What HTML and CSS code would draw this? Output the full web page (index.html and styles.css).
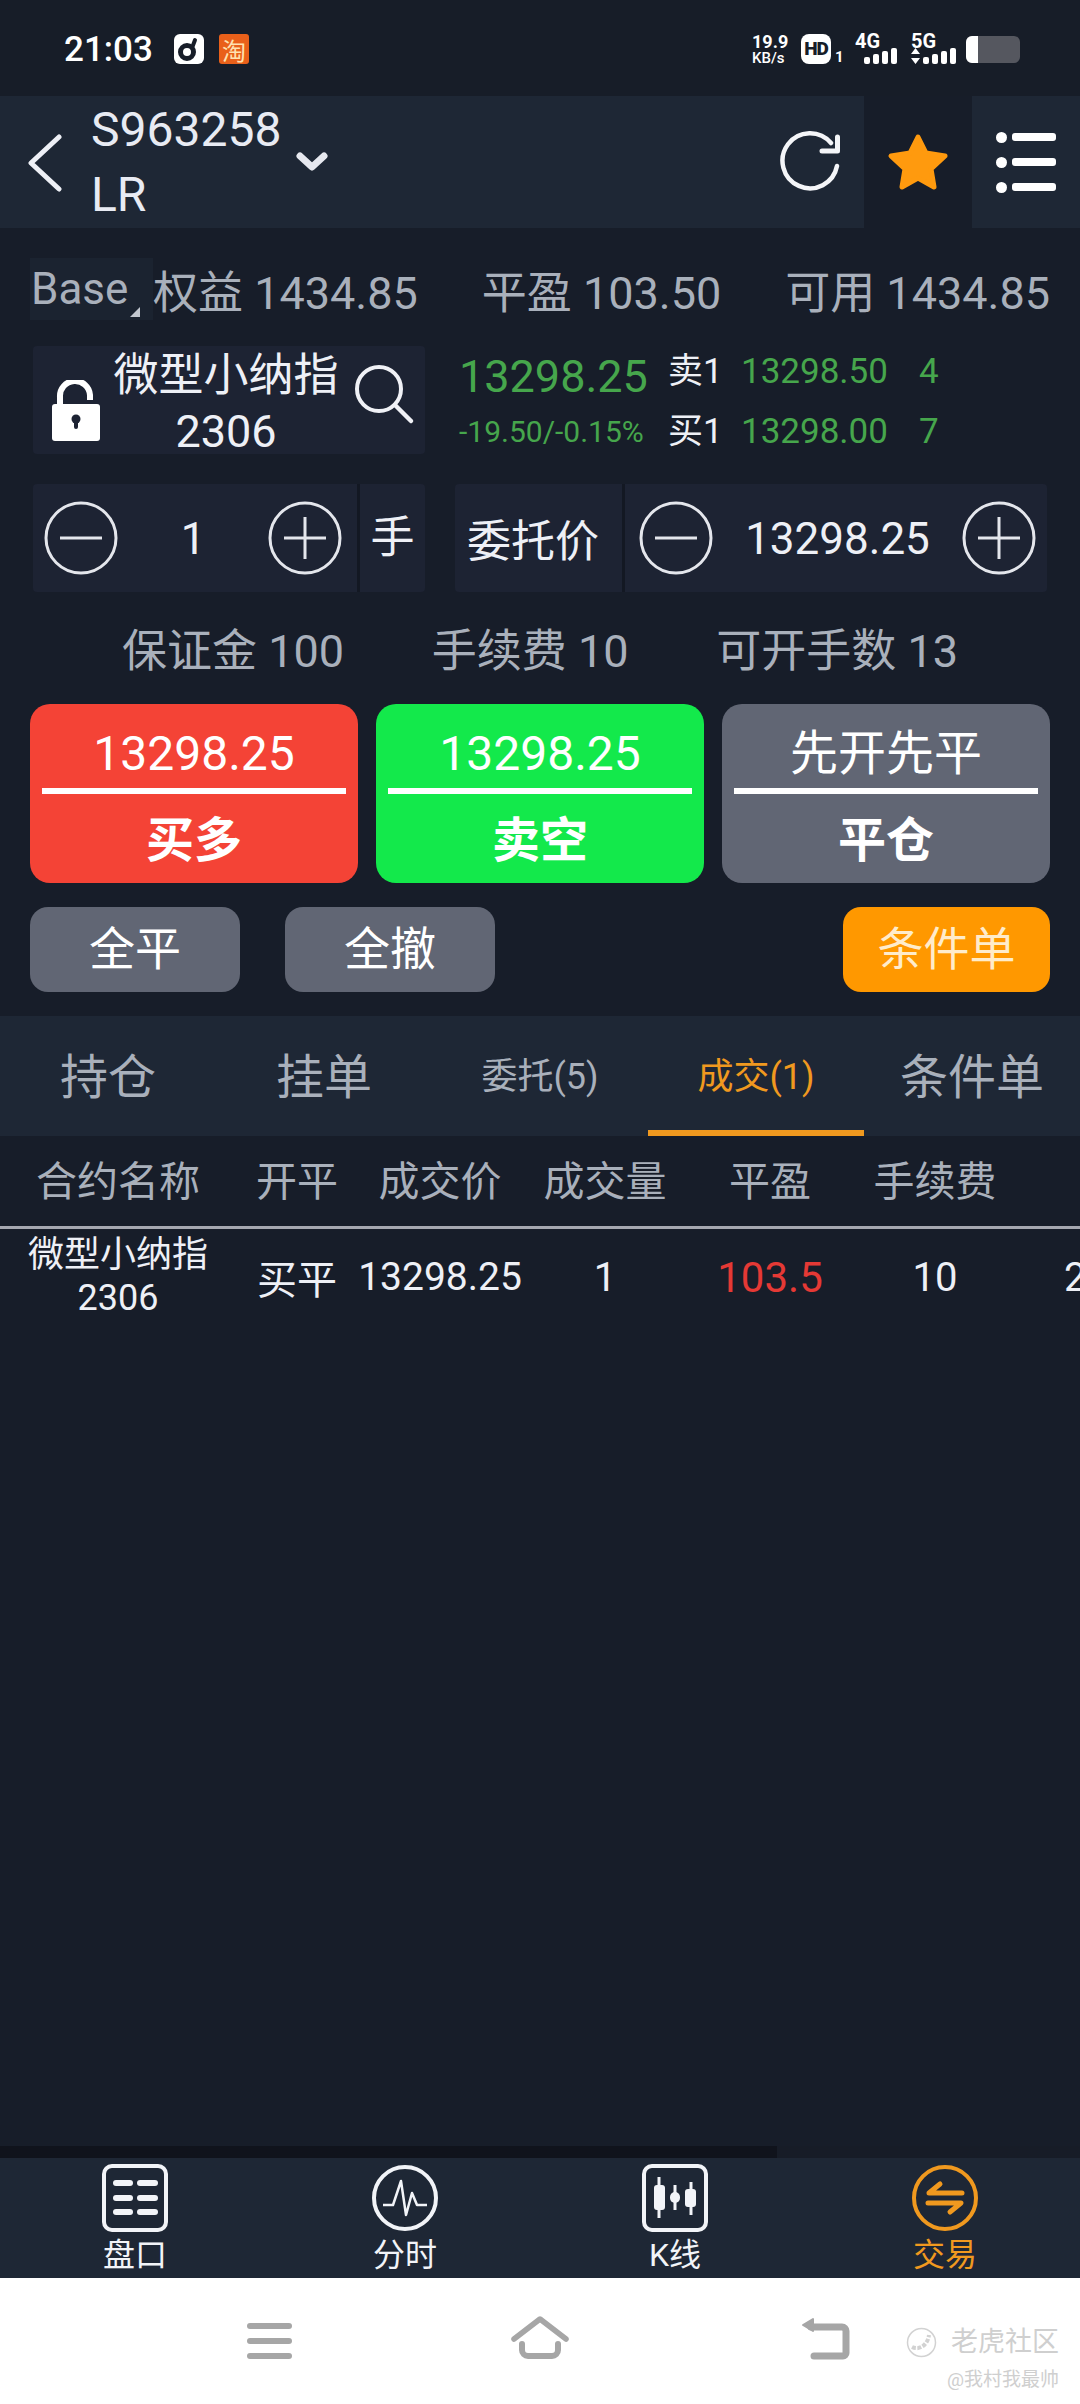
FILE: index.html
```html
<!DOCTYPE html>
<html lang="zh-CN">

<head>
    <meta charset="UTF-8">
    <meta name="viewport" content="width=device-width, initial-scale=1.0">
    <title>交易</title>
    <link rel="stylesheet" href="styles.css">
</head>

<body>

    <div class="page">

        <!-- Status Bar -->
        <div class="statusbar">
            <span class="clock">21:03</span>
            <span class="app-icon app-white">
                <svg width="30" height="30" viewBox="0 0 30 30">
                    <circle cx="13" cy="18" r="6.5" fill="none" stroke="#171d28" stroke-width="5" />
                    <path d="M18 14 L21 6" stroke="#171d28" stroke-width="4" stroke-linecap="round" />
                </svg>
            </span>
            <span class="app-icon app-orange">淘</span>

            <div class="status-right">
                <div class="speed"><span>19.9</span><small>KB/s</small></div>
                <span class="hd">HD</span>
                <span class="hd-sub">1</span>
                <div class="signal signal-4g">
                    <b>4G</b>
                    <div class="bars"><i class="b1"></i><i class="b2"></i><i class="b3"></i><i class="b4"></i></div>
                </div>
                <div class="signal signal-5g">
                    <b>5G</b>
                    <div class="bars">
                        <svg width="9" height="16" viewBox="0 0 9 16">
                            <path d="M4.5 0 L9 6 H0 Z M4.5 16 L0 10 H9 Z" fill="#fff" />
                        </svg>
                        <i class="b1"></i><i class="b2"></i><i class="b3"></i><i class="b4"></i>
                    </div>
                </div>
                <div class="battery"><span class="battery-level"></span></div>
            </div>
        </div>

        <!-- Header -->
        <div class="header">
            <div class="header-main">
                <svg class="back" width="34" height="58" viewBox="0 0 34 58">
                    <path d="M31 3 L3 29 L31 55" fill="none" stroke="#eef0f6" stroke-width="5" stroke-linecap="round" stroke-linejoin="round" />
                </svg>
                <div class="account-id"><span>S963258</span><span>LR</span></div>
                <svg class="caret" width="32" height="20" viewBox="0 0 32 20">
                    <path d="M4 4 L16 15 L28 4" fill="none" stroke="#e6e8ef" stroke-width="7" stroke-linecap="round" stroke-linejoin="round" />
                </svg>
                <svg class="refresh" width="62" height="62" viewBox="0 0 62 62">
                    <path d="M52 12 A27.5 27.5 0 1 0 58 35" fill="none" stroke="#f4f5f8" stroke-width="4.5" stroke-linecap="round" />
                    <path d="M43 20 H58.5 V6" fill="none" stroke="#f4f5f8" stroke-width="5" stroke-linecap="round" stroke-linejoin="round" />
                </svg>
            </div>
            <div class="header-star">
                <svg width="62" height="58" viewBox="0 0 62 58">
                    <polygon points="31,4 39,20 58,23 44,36 47,54 31,45 15,54 18,36 4,23 23,20" fill="#ff9a0e" stroke="#ff9a0e" stroke-width="5" stroke-linejoin="round" />
                </svg>
            </div>
            <div class="header-menu">
                <div class="menu-line"><i></i><span></span></div>
                <div class="menu-line"><i></i><span></span></div>
                <div class="menu-line"><i></i><span></span></div>
            </div>
        </div>

        <!-- Account Summary -->
        <div class="summary">
            <div class="summary-first">
                <span class="base-tag">Base</span>
                <span>权益 1434.85</span>
            </div>
            <span>平盈 103.50</span>
            <span>可用 1434.85</span>
        </div>

        <!-- Instrument and Quote -->
        <div class="quote-row">
            <div class="panel instrument">
                <svg width="50" height="62" viewBox="0 0 50 62">
                    <path d="M9 26 V17 A15 15 0 0 1 39 15 V20" fill="none" stroke="#fff" stroke-width="6" />
                    <rect x="1" y="24" width="48" height="37" rx="3" fill="#fff" />
                    <circle cx="25" cy="39" r="4.5" fill="#1d2333" />
                    <rect x="23" y="40" width="4" height="9" rx="2" fill="#1d2333" />
                </svg>
                <div class="instrument-name"><span>微型小纳指</span><span>2306</span></div>
                <svg width="62" height="62" viewBox="0 0 62 62">
                    <circle cx="26" cy="26" r="22" fill="none" stroke="#f0f1f6" stroke-width="4" />
                    <path d="M42 42 L58 58" stroke="#f0f1f6" stroke-width="4.5" stroke-linecap="round" />
                </svg>
            </div>

            <div class="last-price">
                <span class="last-value">13298.25</span>
                <span class="last-change">-19.50/-0.15%</span>
            </div>

            <div class="book">
                <div class="book-line"><span class="book-label">卖1</span><span class="book-price">13298.50</span><span>4</span></div>
                <div class="book-line"><span class="book-label">买1</span><span class="book-price">13298.00</span><span>7</span></div>
            </div>
        </div>

        <!-- Quantity and Price Steppers -->
        <div class="stepper-row">
            <div class="panel stepper stepper-qty">
                <div class="stepper-body">
                    <svg class="round-btn" width="74" height="74" viewBox="0 0 74 74">
                        <circle cx="37" cy="37" r="35" fill="none" stroke="#e4e6ec" stroke-width="3" />
                        <path d="M16 37 H58" stroke="#e4e6ec" stroke-width="3" />
                    </svg>
                    <span class="stepper-value">1</span>
                    <svg class="round-btn" width="74" height="74" viewBox="0 0 74 74">
                        <circle cx="37" cy="37" r="35" fill="none" stroke="#e4e6ec" stroke-width="3" />
                        <path d="M16 37 H58 M37 16 V58" stroke="#e4e6ec" stroke-width="3" />
                    </svg>
                </div>
                <span class="unit">手</span>
            </div>

            <div class="panel stepper stepper-price">
                <span class="price-label">委托价</span>
                <div class="stepper-body">
                    <svg class="round-btn" width="74" height="74" viewBox="0 0 74 74">
                        <circle cx="37" cy="37" r="35" fill="none" stroke="#e4e6ec" stroke-width="3" />
                        <path d="M16 37 H58" stroke="#e4e6ec" stroke-width="3" />
                    </svg>
                    <span class="stepper-value">13298.25</span>
                    <svg class="round-btn" width="74" height="74" viewBox="0 0 74 74">
                        <circle cx="37" cy="37" r="35" fill="none" stroke="#e4e6ec" stroke-width="3" />
                        <path d="M16 37 H58 M37 16 V58" stroke="#e4e6ec" stroke-width="3" />
                    </svg>
                </div>
            </div>
        </div>

        <!-- Margin and Fee -->
        <div class="fees">
            <span>保证金 100</span>
            <span>手续费 10</span>
            <span>可开手数 13</span>
        </div>

        <!-- Order Buttons -->
        <div class="order-buttons">
            <div class="order-btn btn-red"><span class="order-top">13298.25</span><span class="order-bottom">买多</span></div>
            <div class="order-btn btn-green"><span class="order-top">13298.25</span><span class="order-bottom">卖空</span></div>
            <div class="order-btn btn-gray"><span class="order-top">先开先平</span><span class="order-bottom">平仓</span></div>
        </div>

        <div class="quick-buttons">
            <span class="quick-btn">全平</span>
            <span class="quick-btn">全撤</span>
            <span class="quick-btn quick-orange">条件单</span>
        </div>

        <!-- List Tabs -->
        <div class="tabs">
            <span class="tab">持仓</span>
            <span class="tab">挂单</span>
            <span class="tab tab-small">委托(5)</span>
            <span class="tab tab-small tab-active">成交(1)</span>
            <span class="tab">条件单</span>
        </div>

        <!-- Trades Table -->
        <div class="table">
            <div class="table-row table-head">
                <span>合约名称</span>
                <span>开平</span>
                <span>成交价</span>
                <span>成交量</span>
                <span>平盈</span>
                <span>手续费</span>
                <span></span>
            </div>
            <div class="table-row table-item">
                <span class="cell-name">微型小纳指<br>2306</span>
                <span>买平</span>
                <span class="cell-price">13298.25</span>
                <span>1</span>
                <span class="cell-profit">103.5</span>
                <span>10</span>
                <span class="cell-cut">2023</span>
            </div>
        </div>

        <div class="scrollbar"><div class="scrollbar-thumb"></div></div>

        <!-- Bottom Tabs -->
        <div class="bottom-tabs">
            <div class="bottom-tab">
                <svg width="66" height="68" viewBox="0 0 66 68">
                    <rect x="2" y="2" width="62" height="64" rx="8" fill="none" stroke="#f2f4f8" stroke-width="4" />
                    <g fill="#f2f4f8">
                        <rect x="11" y="16" width="20" height="6" rx="3" />
                        <rect x="35" y="16" width="21" height="6" rx="3" />
                        <rect x="11" y="31" width="20" height="6" rx="3" />
                        <rect x="35" y="31" width="21" height="6" rx="3" />
                        <rect x="11" y="45" width="20" height="6" rx="3" />
                        <rect x="35" y="45" width="21" height="6" rx="3" />
                    </g>
                </svg>
                <span>盘口</span>
            </div>
            <div class="bottom-tab">
                <svg width="66" height="68" viewBox="0 0 66 68">
                    <circle cx="33" cy="34" r="31" fill="none" stroke="#f2f4f8" stroke-width="4" />
                    <path d="M11 41 H21 L29 17 L34 51 L40 29 L45 41 H55" fill="none" stroke="#f2f4f8" stroke-width="2.5" stroke-linejoin="round" />
                </svg>
                <span>分时</span>
            </div>
            <div class="bottom-tab">
                <svg width="66" height="68" viewBox="0 0 66 68">
                    <rect x="2" y="2" width="62" height="64" rx="8" fill="none" stroke="#f2f4f8" stroke-width="4" />
                    <path d="M17 13 V54 M33 21 V46 M49 18 V51" stroke="#f2f4f8" stroke-width="3" />
                    <g fill="#f2f4f8">
                        <rect x="12" y="21" width="11" height="25" rx="3" />
                        <rect x="28" y="28" width="10" height="11" rx="5" />
                        <rect x="43" y="25" width="11" height="18" rx="3" />
                    </g>
                </svg>
                <span>K线</span>
            </div>
            <div class="bottom-tab bottom-tab-active">
                <svg width="66" height="68" viewBox="0 0 66 68">
                    <circle cx="33" cy="34" r="31" fill="none" stroke="#f0991f" stroke-width="4" />
                    <path d="M50 29 H17 L28 20 M16 39 H49 L38 48" fill="none" stroke="#f0991f" stroke-width="5" stroke-linecap="round" stroke-linejoin="round" />
                </svg>
                <span>交易</span>
            </div>
        </div>

        <!-- System Navigation -->
        <div class="navbar">
            <div class="nav-menu"><i></i><i></i><i></i></div>
            <svg class="nav-home" width="58" height="44" viewBox="0 0 58 44">
                <path d="M3 23 L29 3 L55 23" fill="none" stroke="#a6a6a6" stroke-width="5.5" stroke-linecap="round" stroke-linejoin="round" />
                <path d="M11 28 V34 A6 6 0 0 0 17 40 H41 A6 6 0 0 0 47 34 V28" fill="none" stroke="#a6a6a6" stroke-width="6" stroke-linecap="round" />
            </svg>
            <svg class="nav-back" width="50" height="44" viewBox="0 0 50 44">
                <path d="M10 10 H41 A4 4 0 0 1 45 14 V36 A3 3 0 0 1 42 39 H13" fill="none" stroke="#a6a6a6" stroke-width="7" stroke-linecap="round" />
                <path d="M2 8 L12 2 V14 Z" fill="#a6a6a6" stroke="#a6a6a6" stroke-width="2" stroke-linejoin="round" />
            </svg>

            <div class="watermark">
                <div class="watermark-top">
                    <svg width="31" height="31" viewBox="0 0 31 31">
                        <circle cx="15.5" cy="15.5" r="14" fill="none" stroke="#d2d2d2" stroke-width="1.5" />
                        <path d="M6 20 C14 24 22 17 23 8" fill="none" stroke="#d2d2d2" stroke-width="4" stroke-dasharray="4 1.5" />
                    </svg>
                    <span>老虎社区</span>
                </div>
                <span class="watermark-user">@我村我最帅</span>
            </div>
        </div>

    </div>

</body>

</html>
```

FILE: styles.css
```css
/* Basic Reset */
* {
    margin: 0;
    padding: 0;
    box-sizing: border-box;
}

body {
    background-color: #171d29;
    font-family: Roboto, 'Noto Sans CJK SC', sans-serif;
    color: #eef0f6;
    overflow: hidden;
}

.page {
    width: 1080px;
    height: 2404px;
    display: flex;
    flex-direction: column;
    overflow: hidden;
}

svg {
    display: block;
    flex: none;
}

/* Status Bar */
.statusbar {
    height: 96px;
    flex: none;
    display: flex;
    align-items: center;
    padding: 2px 60px 0 64px;
    background-color: #171d28;
}

.clock {
    font-size: 35px;
    font-weight: 500;
    color: #fff;
    width: 110px;
}

.app-icon {
    width: 30px;
    height: 30px;
    margin-right: 15px;
    border-radius: 6px;
    display: flex;
    align-items: center;
    justify-content: center;
}

.app-white {
    background-color: #fff;
}

.app-orange {
    background-color: #e9601a;
    border-radius: 3px;
    color: #ffe2b0;
    font-size: 24px;
}

.status-right {
    margin-left: auto;
    display: flex;
    align-items: center;
    color: #fff;
}

.speed {
    display: flex;
    flex-direction: column;
    width: 49px;
    font-size: 18px;
    font-weight: 700;
    line-height: 18px;
}

.speed small {
    font-size: 15px;
    font-weight: 500;
    line-height: 14px;
}

.hd {
    width: 30px;
    height: 30px;
    border-radius: 8px;
    background-color: #fff;
    color: #171d28;
    font-size: 19px;
    font-weight: 900;
    letter-spacing: -1px;
    text-align: center;
    line-height: 30px;
}

.hd-sub {
    align-self: flex-end;
    width: 24px;
    padding-left: 4px;
    font-size: 15px;
    font-weight: 700;
    line-height: 15px;
}

.signal {
    display: flex;
    flex-direction: column;
    height: 30px;
}

.signal b {
    font-size: 20px;
    line-height: 15px;
}

.signal-4g {
    width: 56px;
}

.signal-4g .bars {
    padding-left: 9px;
}

.signal-5g {
    width: 55px;
}

.bars {
    display: flex;
    align-items: flex-end;
    gap: 3px;
    height: 15px;
}

.bars i {
    display: block;
    width: 6px;
    background-color: #fff;
    border-radius: 2px;
}

.bars .b1 { height: 7px; }
.bars .b2 { height: 10px; }
.bars .b3 { height: 13px; }
.bars .b4 { height: 16px; }

.battery {
    width: 54px;
    height: 27px;
    border-radius: 6px;
    background-color: #55575f;
    overflow: hidden;
}

.battery-level {
    display: block;
    width: 12px;
    height: 100%;
    background-color: #fff;
}

/* Header */
.header {
    height: 132px;
    flex: none;
    display: flex;
}

.header-main {
    width: 864px;
    display: flex;
    align-items: center;
    padding-left: 28px;
    background-color: #1e2735;
}

.back {
    margin-top: 2px;
}

.account-id {
    display: flex;
    flex-direction: column;
    margin-left: 29px;
    width: 205px;
    font-size: 48px;
    line-height: 65px;
    color: #e8ebf3;
}

.refresh {
    margin-left: auto;
    margin-right: 23px;
}

.header-star {
    width: 108px;
    display: flex;
    align-items: center;
    justify-content: center;
}

.header-menu {
    width: 108px;
    display: flex;
    flex-direction: column;
    justify-content: center;
    gap: 14px;
    padding-left: 24px;
    background-color: #1e2735;
}

.menu-line {
    display: flex;
    align-items: center;
    gap: 5px;
}

.menu-line i {
    width: 11px;
    height: 11px;
    border-radius: 50%;
    background-color: #fff;
}

.menu-line span {
    width: 44px;
    height: 8px;
    border-radius: 3px;
    background-color: #fff;
}

/* Account Summary */
.summary {
    height: 62px;
    flex: none;
    margin-top: 30px;
    padding: 0 30px;
    display: flex;
    align-items: center;
    justify-content: space-between;
    font-size: 45px;
    color: #a9b0bb;
    white-space: nowrap;
}

.summary-first {
    display: flex;
    align-items: center;
}

.base-tag {
    position: relative;
    width: 123px;
    height: 62px;
    padding-left: 1px;
    font-size: 44px;
    line-height: 62px;
    background-color: #1b2330;
}

.base-tag::after {
    content: "";
    position: absolute;
    right: 13px;
    bottom: 3px;
    border-style: solid;
    border-width: 0 0 10px 10px;
    border-color: transparent transparent #c3c8d0 transparent;
}

/* Instrument and Quote */
.panel {
    background-color: #1d2333;
    border-radius: 4px;
}

.quote-row {
    height: 108px;
    flex: none;
    margin-top: 26px;
    padding-left: 33px;
    display: flex;
}

.instrument {
    width: 392px;
    display: flex;
    align-items: center;
    padding: 0 10px 0 18px;
}

.instrument svg:first-child {
    margin-top: 22px;
}

.instrument svg:last-child {
    margin-top: -13px;
}

.instrument-name {
    flex: 1;
    display: flex;
    flex-direction: column;
    align-items: center;
    padding-top: 7px;
    font-size: 45px;
    line-height: 56px;
    margin-right: 2px;
    white-space: nowrap;
}

.last-price {
    width: 209px;
    margin-left: 34px;
    display: flex;
    flex-direction: column;
    color: #46a64c;
}

.last-value {
    height: 62px;
    font-size: 45px;
    line-height: 62px;
}

.last-change {
    font-size: 30px;
    line-height: 48px;
    white-space: nowrap;
}

.book {
    display: flex;
    flex-direction: column;
    gap: 12px;
    padding-top: 2px;
    color: #46a64c;
    font-size: 35px;
}

.book-line {
    display: flex;
    height: 48px;
    line-height: 48px;
}

.book-label {
    width: 73px;
    color: #eef0f6;
}

.book-price {
    width: 178px;
}

/* Quantity and Price Steppers */
.stepper-row {
    height: 108px;
    flex: none;
    margin-top: 30px;
    padding-left: 33px;
    display: flex;
    gap: 30px;
}

.stepper {
    display: flex;
    align-items: center;
    font-size: 44px;
}

.stepper-body {
    height: 100%;
    display: flex;
    align-items: center;
    justify-content: space-between;
}

.stepper-value {
    padding-top: 2px;
}

.stepper-qty {
    width: 392px;
}

.stepper-qty .stepper-body {
    width: 324px;
    padding: 0 15px 0 11px;
}

.unit {
    flex: 1;
    height: 100%;
    line-height: 108px;
    text-align: center;
    border-left: 3px solid #131823;
}

.stepper-price {
    width: 592px;
}

.price-label {
    width: 167px;
    padding-left: 12px;
    white-space: nowrap;
}

.stepper-price .stepper-body {
    flex: 1;
    padding: 0 11px 0 14px;
    border-left: 3px solid #131823;
}

/* Margin and Fee */
.fees {
    height: 60px;
    flex: none;
    margin-top: 25px;
    display: flex;
    align-items: center;
    padding: 0 122px 0 122px;
    justify-content: space-between;
    font-size: 45px;
    color: #a9b0bb;
    white-space: nowrap;
}

/* Order Buttons */
.order-buttons {
    height: 179px;
    flex: none;
    margin-top: 27px;
    padding: 0 30px;
    display: flex;
    gap: 18px;
}

.order-btn {
    flex: 1;
    display: flex;
    flex-direction: column;
    align-items: stretch;
    border-radius: 20px;
    padding: 0 12px;
    color: #fff;
    text-align: center;
    font-size: 48px;
}

.btn-red {
    background-color: #f44336;
}

.btn-green {
    background-color: #13e94b;
}

.btn-gray {
    background-color: #616674;
}

.order-top {
    height: 90px;
    line-height: 100px;
    border-bottom: 6px solid #fff;
}

.order-bottom {
    flex: 1;
    line-height: 94px;
    font-weight: 700;
}

.quick-buttons {
    height: 85px;
    flex: none;
    margin-top: 24px;
    padding: 0 30px;
    display: flex;
    gap: 45px;
}

.quick-btn {
    width: 210px;
    border-radius: 18px;
    background-color: #616674;
    color: #fff;
    font-size: 46px;
    line-height: 85px;
    text-align: center;
}

.quick-orange {
    width: 207px;
    margin-left: auto;
    background-color: #ff9800;
    color: #ffeccb;
}

/* List Tabs */
.tabs {
    height: 120px;
    flex: none;
    margin-top: 24px;
    display: flex;
    background-color: #1e2735;
}

.tab {
    width: 216px;
    text-align: center;
    font-size: 48px;
    line-height: 123px;
    color: #a9b0bb;
}

.tab-small {
    font-size: 36px;
}

.tab-active {
    color: #f0991f;
    border-bottom: 6px solid #f0991f;
}

/* Trades Table */
.table {
    flex: 1;
    overflow: hidden;
}

.table-row {
    display: grid;
    grid-template-columns: 236px 122px 164px 166px 164px 166px 164px;
    width: 1182px;
    text-align: center;
    align-items: center;
    white-space: nowrap;
}

.table-head {
    height: 93px;
    padding-bottom: 6px;
    font-size: 41px;
    color: #a9b0bb;
    border-bottom: 3px solid #a5a7b0;
}

.table-item {
    height: 96px;
    font-size: 40px;
}

.cell-name {
    font-size: 36px;
    line-height: 43px;
}

.cell-price {
    font-size: 39px;
}

.cell-profit {
    font-size: 42px;
    color: #e53935;
}

.cell-cut {
    text-align: left;
    padding-left: 46px;
}

.scrollbar {
    height: 12px;
    flex: none;
    background-color: #171c27;
}

.scrollbar-thumb {
    width: 777px;
    height: 100%;
    background-color: #10131c;
}

/* Bottom Tabs */
.bottom-tabs {
    height: 120px;
    flex: none;
    display: grid;
    grid-template-columns: repeat(4, 1fr);
    background-color: #1e2735;
}

.bottom-tab {
    display: flex;
    flex-direction: column;
    align-items: center;
    padding-top: 6px;
    font-size: 32px;
    line-height: 46px;
    color: #f2f4f8;
}

.bottom-tab-active {
    color: #f0991f;
}

/* System Navigation */
.navbar {
    position: relative;
    height: 126px;
    flex: none;
    background-color: #fff;
}

.nav-menu {
    position: absolute;
    left: 247px;
    top: 45px;
    width: 45px;
    display: flex;
    flex-direction: column;
    gap: 9px;
}

.nav-menu i {
    display: block;
    height: 6px;
    border-radius: 3px;
    background-color: #a6a6a6;
}

.nav-home {
    position: absolute;
    left: 511px;
    top: 38px;
}

.nav-back {
    position: absolute;
    left: 801px;
    top: 39px;
}

.watermark {
    position: absolute;
    right: 21px;
    top: 46px;
    display: flex;
    flex-direction: column;
    align-items: flex-end;
    color: #cfcfcf;
}

.watermark-top {
    display: flex;
    align-items: center;
    gap: 14px;
    font-size: 27px;
    line-height: 36px;
}

.watermark-user {
    margin-top: 8px;
    font-size: 19px;
    line-height: 24px;
}
```
